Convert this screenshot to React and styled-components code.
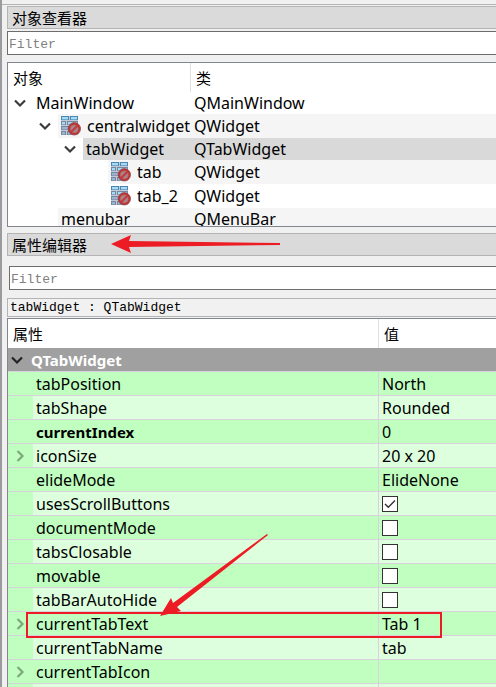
import React, { useState } from "react";
import styled, { createGlobalStyle, css } from "styled-components";

const uiFont = `"Noto Sans", "Noto Sans CJK SC", sans-serif`;
const monoFont = `"Liberation Mono", "Noto Sans CJK SC", monospace`;

const GlobalStyle = createGlobalStyle`
  * { box-sizing: border-box; }
  body {
    margin: 0;
    background: #f0f0f0;
    color: #000;
    font: 16px/22px ${uiFont};
  }
`;

const Window = styled.main`
  position: relative;
  display: flex;
  flex-direction: column;
  height: 100vh;
  overflow: hidden;
  border-left: 2px solid #9a9a9f;
  background: #f0f0f0;
`;

const TopEdge = styled.div`
  flex: none;
  height: 5px;
  border-bottom: 1px solid #b4b4b4;
`;

const Dock = styled.section`
  display: flex;
  flex-direction: column;
  flex: ${(p) => (p.$fill ? "1 1 0" : "none")};
  min-height: 0;
  padding: ${(p) => (p.$fill ? "6px 0 0 5px" : "1px 0 0 5px")};
`;

const DockTitle = styled.h2`
  flex: none;
  margin: 0;
  height: 23px;
  padding-left: 4px;
  border: 1px solid #b4b4b4;
  border-right: 0;
  background: #dadada;
  font: 15px/21px "Noto Sans CJK SC", sans-serif;
`;

const FilterInput = styled.input`
  flex: none;
  height: 24px;
  margin: ${(p) => (p.$inset ? "10px 0 8px 2px" : "2px 0 7px")};
  padding: 2px 1px 0;
  border: 1px solid #6d6d6d;
  border-right: 0;
  border-radius: 0;
  outline: none;
  background: #fff;
  font: 13px/20px ${monoFont};
  &::placeholder {
    color: #808080;
    opacity: 1;
  }
`;

const Selection = styled.div`
  flex: none;
  height: 19px;
  margin-bottom: 1px;
  padding-left: 2px;
  border: 1px solid #b4b4b4;
  border-right: 0;
  background: #f1f1f1;
  font: 13px/18px ${monoFont};
`;

const TreeFrame = styled.div`
  flex: ${(p) => (p.$fill ? "1 1 0" : "none")};
  height: ${(p) => (p.$fill ? "auto" : "165px")};
  min-height: 0;
  overflow: hidden;
  border: 1px solid #82878f;
  border-right: 0;
  border-bottom-width: ${(p) => (p.$fill ? "0" : "1px")};
  background: #fff;
`;

const Table = styled.table`
  width: 100%;
  table-layout: fixed;
  border-collapse: separate;
  border-spacing: 0;
`;

const NameCol = styled.col`
  width: ${(p) => p.$width}px;
`;

const HeadCell = styled.th`
  height: 29px;
  padding: 0 0 0 5px;
  border-left: ${(p) => (p.$divided ? "1px solid #e0e0e0" : "0")};
  text-align: left;
  font: 15px/22px "Noto Sans CJK SC", sans-serif;
`;

const ObjectCell = styled.td`
  height: ${(p) => p.$height}px;
  padding: 0 0 0 ${(p) => p.$indent}px;
  white-space: nowrap;
`;

const Fill = styled.div`
  display: flex;
  align-items: center;
  gap: 6px;
  height: ${(p) => p.$height}px;
  padding-left: 3px;
  background: ${(p) => p.$tone};
`;

const TypeFill = styled(Fill)`
  padding-left: 4px;
`;

const Branch = styled.div`
  display: flex;
  align-items: center;
`;

const FillName = styled(Fill)`
  flex: 1;
`;

const Toggle = styled.button`
  flex: none;
  display: flex;
  align-items: center;
  width: 25px;
  height: 22px;
  padding: 0 0 0 6px;
  border: 0;
  background: transparent;
  color: ${(p) => p.$color || "#3c3c3c"};
`;

const ToggleSpace = styled.span`
  flex: none;
  width: 25px;
`;

const GroupCell = styled.th`
  height: 24px;
  padding: 0;
  border-bottom: 1px solid #d9d2dc;
  background: #a0a0a0;
  color: #fff;
  text-align: left;
  font-size: 15px;
  font-weight: 700;
`;

const GroupLine = styled.div`
  display: flex;
  align-items: center;
  height: 23px;
`;

const GroupToggle = styled(Toggle)`
  width: 23px;
  padding-left: 3px;
`;

const rowLine = css`
  height: 24px;
  padding: 0;
  border-bottom: 1px solid #d8d2dc;
`;

const PropertyName = styled.th`
  ${rowLine}
  background: #c0ffc0;
  text-align: left;
  font-size: ${(p) => (p.$bold ? 15 : 16)}px;
  font-weight: ${(p) => (p.$bold ? 700 : 400)};
`;

const PropertyLabel = styled.span`
  flex: 1;
  height: 23px;
  padding-left: 3px;
  line-height: 24px;
  background: ${(p) => p.$tone};
`;

const PropertyValue = styled.td`
  ${rowLine}
  padding-left: 3px;
  border-left: 1px solid #d8d2dc;
  background: ${(p) => p.$tone};
`;

const CheckWrap = styled.span`
  display: grid;
  width: 16px;
  height: 16px;
  > * {
    grid-area: 1 / 1;
  }
  svg {
    pointer-events: none;
    z-index: 1;
  }
`;

const Check = styled.input`
  appearance: none;
  width: 16px;
  height: 16px;
  margin: 0;
  border: 1px solid #333;
  background: #fff;
`;

const Annotations = styled.svg`
  position: absolute;
  top: 0;
  left: -2px;
  pointer-events: none;
`;

function Chevron({ open = true }) {
  return (
    <svg width="12" height="12" viewBox="0 0 12 12" fill="none" stroke="currentColor" strokeWidth="2.2" aria-hidden="true">
      <path d={open ? "M1 3.5 6 8.5 11 3.5" : "M3.5 1 8.5 6 3.5 11"} />
    </svg>
  );
}

const bricks = [
  [0, 0, 8], [9, 0, 8],
  [0, 5, 5], [6, 5, 11],
  [0, 10, 8], [9, 10, 8],
  [0, 15, 5], [6, 15, 8],
];

function LayoutIcon() {
  return (
    <svg width="20" height="20" viewBox="0 0 20 20" aria-hidden="true">
      <rect width="17" height="19" fill="#c3cad6" />
      {bricks.map(([x, y, w]) => (
        <g key={`${x}-${y}`}>
          <rect x={x} y={y} width={w} height="4" fill={y < 5 ? "#4a86b0" : "#7487a3"} />
          <rect x={x + 1} y={y + 1} width={w - 2} height="2.4" fill={y < 10 ? "#a5dcf5" : "#9fb3cf"} />
        </g>
      ))}
      <circle cx="13.3" cy="12.8" r="6.2" fill="#b93636" stroke="#94494c" strokeWidth="0.8" />
      <circle cx="13.3" cy="12.8" r="3.9" fill="#9c8a95" stroke="#d2605c" strokeWidth="0.8" />
      <path d="M10.2 16 16.4 9.7" stroke="#c23a3a" strokeWidth="2" />
    </svg>
  );
}

const objects = [
  { name: "MainWindow", type: "QMainWindow", indent: 0, toggle: true, height: 22, tone: "#fff" },
  { name: "centralwidget", type: "QWidget", indent: 25, toggle: true, icon: true, height: 24, tone: "#f5f5f5" },
  { name: "tabWidget", type: "QTabWidget", indent: 50, toggle: true, height: 22, tone: "#d9d9d9" },
  { name: "tab", type: "QWidget", indent: 75, icon: true, height: 24, tone: "#f5f5f5" },
  { name: "tab_2", type: "QWidget", indent: 75, icon: true, height: 24, tone: "#fff" },
  { name: "menubar", type: "QMenuBar", indent: 25, height: 22, tone: "#f5f5f5" },
];

const properties = [
  { name: "tabPosition", value: "North" },
  { name: "tabShape", value: "Rounded" },
  { name: "currentIndex", value: "0", bold: true },
  { name: "iconSize", value: "20 x 20", toggle: true },
  { name: "elideMode", value: "ElideNone" },
  { name: "usesScrollButtons", value: true },
  { name: "documentMode", value: false },
  { name: "tabsClosable", value: false },
  { name: "movable", value: false },
  { name: "tabBarAutoHide", value: false },
  { name: "currentTabText", value: "Tab 1", toggle: true },
  { name: "currentTabName", value: "tab" },
  { name: "currentTabIcon", value: "", toggle: true },
  { name: "", value: "" },
];

function CheckBox({ initial, labelledBy }) {
  const [on, setOn] = useState(initial);
  return (
    <CheckWrap>
      <Check type="checkbox" checked={on} onChange={() => setOn(!on)} aria-labelledby={labelledBy} />
      {on && (
        <svg width="16" height="16" viewBox="0 0 16 16" fill="none" stroke="#333" strokeWidth="1.4" aria-hidden="true">
          <path d="M3 8 6.3 11.3 13 4.6" />
        </svg>
      )}
    </CheckWrap>
  );
}

function ObjectTree() {
  return (
    <TreeFrame>
      <Table>
        <colgroup>
          <NameCol $width={182} />
          <col />
        </colgroup>
        <thead>
          <tr>
            <HeadCell>对象</HeadCell>
            <HeadCell $divided>类</HeadCell>
          </tr>
        </thead>
        <tbody>
          {objects.map((o) => (
            <tr key={o.name}>
              <ObjectCell $indent={o.indent} $height={o.height}>
                <Branch>
                  {o.toggle ? (
                    <Toggle type="button" aria-label={`Collapse ${o.name}`}>
                      <Chevron />
                    </Toggle>
                  ) : (
                    <ToggleSpace />
                  )}
                  <FillName $height={o.height} $tone={o.tone}>
                    {o.icon && <LayoutIcon />}
                    {o.name}
                  </FillName>
                </Branch>
              </ObjectCell>
              <ObjectCell $indent={0} $height={o.height}>
                <TypeFill $height={o.height} $tone={o.tone}>{o.type}</TypeFill>
              </ObjectCell>
            </tr>
          ))}
        </tbody>
      </Table>
    </TreeFrame>
  );
}

function PropertyTree() {
  return (
    <TreeFrame $fill>
      <Table>
        <colgroup>
          <NameCol $width={370} />
          <col />
        </colgroup>
        <thead>
          <tr>
            <HeadCell>属性</HeadCell>
            <HeadCell $divided>值</HeadCell>
          </tr>
        </thead>
        <tbody>
          <tr>
            <GroupCell colSpan={2}>
              <GroupLine>
                <GroupToggle type="button" $color="#222" aria-label="Collapse QTabWidget">
                  <Chevron />
                </GroupToggle>
                QTabWidget
              </GroupLine>
            </GroupCell>
          </tr>
          {properties.map((p, i) => {
            const tone = i % 2 ? "#deffde" : "#c0ffc0";
            const id = `property-${i}`;
            return (
              <tr key={id}>
                <PropertyName scope="row" $bold={p.bold}>
                  <Branch>
                    {p.toggle ? (
                      <Toggle type="button" $color="#7fa87f" aria-label={`Expand ${p.name}`}>
                        <Chevron open={false} />
                      </Toggle>
                    ) : (
                      <ToggleSpace />
                    )}
                    <PropertyLabel id={id} $tone={tone}>{p.name}</PropertyLabel>
                  </Branch>
                </PropertyName>
                <PropertyValue $tone={tone}>
                  {typeof p.value === "boolean" ? <CheckBox initial={p.value} labelledBy={id} /> : p.value}
                </PropertyValue>
              </tr>
            );
          })}
        </tbody>
      </Table>
    </TreeFrame>
  );
}

export default function App() {
  return (
    <>
      <GlobalStyle />
      <Window>
        <TopEdge />
        <Dock>
          <DockTitle>对象查看器</DockTitle>
          <FilterInput placeholder="Filter" aria-label="Filter objects" />
          <ObjectTree />
        </Dock>
        <Dock $fill>
          <DockTitle>属性编辑器</DockTitle>
          <FilterInput $inset placeholder="Filter" aria-label="Filter properties" />
          <Selection>tabWidget : QTabWidget</Selection>
          <PropertyTree />
        </Dock>
        <Annotations width="460" height="660" viewBox="0 0 460 660" aria-hidden="true">
          <path d="M111 244 131 235 129 241 280 243V245L129 247 131 253Z" fill="#ed1c24" />
          <path d="M160 616 171 598 173 603 267 534 268 535 177 607 181 611Z" fill="#ed1c24" />
          <rect x="27" y="613" width="414" height="24" fill="none" stroke="#ed1c24" strokeWidth="2" />
        </Annotations>
      </Window>
    </>
  );
}
